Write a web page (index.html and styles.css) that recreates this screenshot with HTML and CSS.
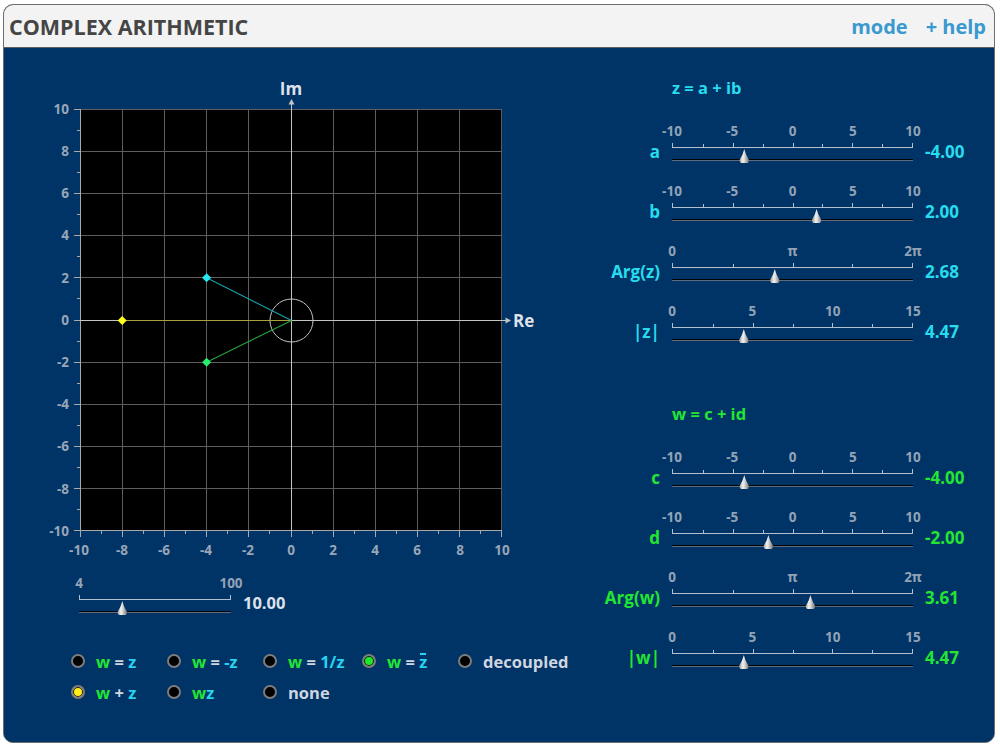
FILE: index.html
```html
<!DOCTYPE html>
<html lang="en">
<head>
<meta charset="utf-8">
<title>Complex Arithmetic</title>
<link rel="stylesheet" href="styles.css">
</head>
<body>
<div class="app">
  <header class="hdr">
    <span class="title">COMPLEX ARITHMETIC</span>
    <nav class="links"><span>mode</span><span class="help">+ help</span></nav>
  </header>
  <main class="main">
    <section class="left">
      <svg class="plot" viewBox="30 70 540 500" width="540" height="500" xmlns="http://www.w3.org/2000/svg">
        <rect x="80" y="109" width="422" height="422" fill="#000"/>
        <g stroke="#5e5e5e" stroke-width="1">
          <line x1="122.5" y1="109" x2="122.5" y2="531"/>
          <line x1="164.5" y1="109" x2="164.5" y2="531"/>
          <line x1="206.5" y1="109" x2="206.5" y2="531"/>
          <line x1="248.5" y1="109" x2="248.5" y2="531"/>
          <line x1="333.5" y1="109" x2="333.5" y2="531"/>
          <line x1="375.5" y1="109" x2="375.5" y2="531"/>
          <line x1="417.5" y1="109" x2="417.5" y2="531"/>
          <line x1="459.5" y1="109" x2="459.5" y2="531"/>
          <line x1="501.5" y1="109" x2="501.5" y2="531"/>
          <line x1="80" y1="109.5" x2="502" y2="109.5"/>
          <line x1="80" y1="151.5" x2="502" y2="151.5"/>
          <line x1="80" y1="193.5" x2="502" y2="193.5"/>
          <line x1="80" y1="235.5" x2="502" y2="235.5"/>
          <line x1="80" y1="277.5" x2="502" y2="277.5"/>
          <line x1="80" y1="362.5" x2="502" y2="362.5"/>
          <line x1="80" y1="404.5" x2="502" y2="404.5"/>
          <line x1="80" y1="446.5" x2="502" y2="446.5"/>
          <line x1="80" y1="488.5" x2="502" y2="488.5"/>
        </g>
        <g stroke="#a9a9a9" stroke-width="1">
          <line x1="80.5" y1="109" x2="80.5" y2="531"/>
          <line x1="80" y1="530.5" x2="502" y2="530.5"/>
          <line x1="74" y1="109.5" x2="80" y2="109.5"/>
          <line x1="74" y1="151.5" x2="80" y2="151.5"/>
          <line x1="74" y1="193.5" x2="80" y2="193.5"/>
          <line x1="74" y1="235.5" x2="80" y2="235.5"/>
          <line x1="74" y1="277.5" x2="80" y2="277.5"/>
          <line x1="74" y1="320.5" x2="80" y2="320.5"/>
          <line x1="74" y1="362.5" x2="80" y2="362.5"/>
          <line x1="74" y1="404.5" x2="80" y2="404.5"/>
          <line x1="74" y1="446.5" x2="80" y2="446.5"/>
          <line x1="74" y1="488.5" x2="80" y2="488.5"/>
          <line x1="74" y1="530.5" x2="80" y2="530.5"/>
          <line x1="77" y1="130.5" x2="80" y2="130.5"/>
          <line x1="77" y1="172.5" x2="80" y2="172.5"/>
          <line x1="77" y1="214.5" x2="80" y2="214.5"/>
          <line x1="77" y1="256.5" x2="80" y2="256.5"/>
          <line x1="77" y1="298.5" x2="80" y2="298.5"/>
          <line x1="77" y1="341.5" x2="80" y2="341.5"/>
          <line x1="77" y1="383.5" x2="80" y2="383.5"/>
          <line x1="77" y1="425.5" x2="80" y2="425.5"/>
          <line x1="77" y1="467.5" x2="80" y2="467.5"/>
          <line x1="77" y1="509.5" x2="80" y2="509.5"/>
          <line x1="80.5" y1="531" x2="80.5" y2="537"/>
          <line x1="122.5" y1="531" x2="122.5" y2="537"/>
          <line x1="164.5" y1="531" x2="164.5" y2="537"/>
          <line x1="206.5" y1="531" x2="206.5" y2="537"/>
          <line x1="248.5" y1="531" x2="248.5" y2="537"/>
          <line x1="291.5" y1="531" x2="291.5" y2="537"/>
          <line x1="333.5" y1="531" x2="333.5" y2="537"/>
          <line x1="375.5" y1="531" x2="375.5" y2="537"/>
          <line x1="417.5" y1="531" x2="417.5" y2="537"/>
          <line x1="459.5" y1="531" x2="459.5" y2="537"/>
          <line x1="501.5" y1="531" x2="501.5" y2="537"/>
          <line x1="101.5" y1="531" x2="101.5" y2="534"/>
          <line x1="143.5" y1="531" x2="143.5" y2="534"/>
          <line x1="185.5" y1="531" x2="185.5" y2="534"/>
          <line x1="227.5" y1="531" x2="227.5" y2="534"/>
          <line x1="269.5" y1="531" x2="269.5" y2="534"/>
          <line x1="312.5" y1="531" x2="312.5" y2="534"/>
          <line x1="354.5" y1="531" x2="354.5" y2="534"/>
          <line x1="396.5" y1="531" x2="396.5" y2="534"/>
          <line x1="438.5" y1="531" x2="438.5" y2="534"/>
          <line x1="480.5" y1="531" x2="480.5" y2="534"/>
        </g>
        <g stroke="#c4c4c4" stroke-width="1" fill="none">
          <line x1="291.5" y1="103" x2="291.5" y2="531"/>
          <line x1="80" y1="320.5" x2="506" y2="320.5"/>
          <circle cx="291.5" cy="320.5" r="21.5"/>
        </g>
        <g fill="#c4c4c4">
          <polygon points="291.5,99 288.5,104.5 294.5,104.5"/>
          <polygon points="511,320.5 505.5,317.5 505.5,323.5"/>
        </g>
        <line x1="122" y1="320.5" x2="291.5" y2="320.5" stroke="#a9a23a" stroke-width="1.2"/>
        <line x1="206.6" y1="277.8" x2="291.5" y2="320.5" stroke="#1b9ea6" stroke-width="1.2"/>
        <line x1="206.6" y1="362.2" x2="291.5" y2="320.5" stroke="#27a03c" stroke-width="1.2"/>
        <polygon points="122.2,316 126.7,320.5 122.2,325 117.7,320.5" fill="#ffff1e"/>
        <polygon points="206.6,273.3 211.1,277.8 206.6,282.3 202.1,277.8" fill="#26e8f2"/>
        <polygon points="206.6,357.7 211.1,362.2 206.6,366.7 202.1,362.2" fill="#27ec6e"/>
        <g class="ylab" text-anchor="end">
          <text x="69" y="109">10</text>
          <text x="69" y="151">8</text>
          <text x="69" y="193">6</text>
          <text x="69" y="235">4</text>
          <text x="69" y="278">2</text>
          <text x="69" y="320">0</text>
          <text x="69" y="362">-2</text>
          <text x="69" y="404">-4</text>
          <text x="69" y="446">-6</text>
          <text x="69" y="489">-8</text>
          <text x="69" y="531">-10</text>
        </g>
        <g class="xlab" text-anchor="middle">
          <text x="79" y="550">-10</text>
          <text x="122" y="550">-8</text>
          <text x="164" y="550">-6</text>
          <text x="206" y="550">-4</text>
          <text x="248" y="550">-2</text>
          <text x="291" y="550">0</text>
          <text x="333" y="550">2</text>
          <text x="375" y="550">4</text>
          <text x="417" y="550">6</text>
          <text x="460" y="550">8</text>
          <text x="502" y="550">10</text>
        </g>
        <text class="axname" x="291" y="88" text-anchor="middle">Im</text>
        <text class="axname" x="513" y="320" text-anchor="start">Re</text>
      </svg>

      <div class="zoomrow">
        <div class="slider short">
          <div class="tlabels"><span style="left:0%">4</span><span style="left:100%">100</span></div>
          <div class="scale"></div>
          <div class="track"><b class="thumb" style="left:28.5%"></b></div>
        </div>
        <div class="val plain">10.00</div>
      </div>

      <div class="radios">
        <label class="radio"><i class="dot"></i><span><em class="g">w</em> = <em class="c">z</em></span></label>
        <label class="radio"><i class="dot"></i><span><em class="g">w</em> = <em class="c">-z</em></span></label>
        <label class="radio"><i class="dot"></i><span><em class="g">w</em> = <em class="c">1/z</em></span></label>
        <label class="radio"><i class="dot on-green"></i><span><em class="g">w</em> = <em class="c bar">z</em></span></label>
        <label class="radio"><i class="dot"></i><span>decoupled</span></label>
        <label class="radio"><i class="dot on-yellow"></i><span><em class="g">w</em> + <em class="c">z</em></span></label>
        <label class="radio"><i class="dot"></i><span><em class="g">w</em><em class="c">z</em></span></label>
        <label class="radio"><i class="dot"></i><span>none</span></label>
      </div>
    </section>

    <section class="right">
      <div class="group zc">
        <div class="gtitle">z = a + ib</div>
        <div class="srow">
          <div class="lbl">a</div>
          <div class="slider">
            <div class="tlabels"><span style="left:0%">-10</span><span style="left:25%">-5</span><span style="left:50%">0</span><span style="left:75%">5</span><span style="left:100%">10</span></div>
            <div class="scale"><i style="left:12.5%"></i><i class="mj" style="left:25%"></i><i style="left:37.5%"></i><i class="mj" style="left:50%"></i><i style="left:62.5%"></i><i class="mj" style="left:75%"></i><i style="left:87.5%"></i></div>
            <div class="track"><b class="thumb" style="left:30%"></b></div>
          </div>
          <div class="val">-4.00</div>
        </div>
        <div class="srow">
          <div class="lbl">b</div>
          <div class="slider">
            <div class="tlabels"><span style="left:0%">-10</span><span style="left:25%">-5</span><span style="left:50%">0</span><span style="left:75%">5</span><span style="left:100%">10</span></div>
            <div class="scale"><i style="left:12.5%"></i><i class="mj" style="left:25%"></i><i style="left:37.5%"></i><i class="mj" style="left:50%"></i><i style="left:62.5%"></i><i class="mj" style="left:75%"></i><i style="left:87.5%"></i></div>
            <div class="track"><b class="thumb" style="left:60%"></b></div>
          </div>
          <div class="val">2.00</div>
        </div>
        <div class="srow">
          <div class="lbl">Arg(z)</div>
          <div class="slider">
            <div class="tlabels"><span style="left:0%">0</span><span style="left:50%">π</span><span style="left:100%">2π</span></div>
            <div class="scale"><i style="left:25%"></i><i class="mj" style="left:50%"></i><i style="left:75%"></i></div>
            <div class="track"><b class="thumb" style="left:42.65%"></b></div>
          </div>
          <div class="val">2.68</div>
        </div>
        <div class="srow">
          <div class="lbl">|z|</div>
          <div class="slider">
            <div class="tlabels"><span style="left:0%">0</span><span style="left:33.333%">5</span><span style="left:66.667%">10</span><span style="left:100%">15</span></div>
            <div class="scale"><i style="left:16.667%"></i><i class="mj" style="left:33.333%"></i><i style="left:50%"></i><i class="mj" style="left:66.667%"></i><i style="left:83.333%"></i></div>
            <div class="track"><b class="thumb" style="left:29.8%"></b></div>
          </div>
          <div class="val">4.47</div>
        </div>
      </div>

      <div class="group wc">
        <div class="gtitle">w = c + id</div>
        <div class="srow">
          <div class="lbl">c</div>
          <div class="slider">
            <div class="tlabels"><span style="left:0%">-10</span><span style="left:25%">-5</span><span style="left:50%">0</span><span style="left:75%">5</span><span style="left:100%">10</span></div>
            <div class="scale"><i style="left:12.5%"></i><i class="mj" style="left:25%"></i><i style="left:37.5%"></i><i class="mj" style="left:50%"></i><i style="left:62.5%"></i><i class="mj" style="left:75%"></i><i style="left:87.5%"></i></div>
            <div class="track"><b class="thumb" style="left:30%"></b></div>
          </div>
          <div class="val">-4.00</div>
        </div>
        <div class="srow">
          <div class="lbl">d</div>
          <div class="slider">
            <div class="tlabels"><span style="left:0%">-10</span><span style="left:25%">-5</span><span style="left:50%">0</span><span style="left:75%">5</span><span style="left:100%">10</span></div>
            <div class="scale"><i style="left:12.5%"></i><i class="mj" style="left:25%"></i><i style="left:37.5%"></i><i class="mj" style="left:50%"></i><i style="left:62.5%"></i><i class="mj" style="left:75%"></i><i style="left:87.5%"></i></div>
            <div class="track"><b class="thumb" style="left:40%"></b></div>
          </div>
          <div class="val">-2.00</div>
        </div>
        <div class="srow">
          <div class="lbl">Arg(w)</div>
          <div class="slider">
            <div class="tlabels"><span style="left:0%">0</span><span style="left:50%">π</span><span style="left:100%">2π</span></div>
            <div class="scale"><i style="left:25%"></i><i class="mj" style="left:50%"></i><i style="left:75%"></i></div>
            <div class="track"><b class="thumb" style="left:57.45%"></b></div>
          </div>
          <div class="val">3.61</div>
        </div>
        <div class="srow">
          <div class="lbl">|w|</div>
          <div class="slider">
            <div class="tlabels"><span style="left:0%">0</span><span style="left:33.333%">5</span><span style="left:66.667%">10</span><span style="left:100%">15</span></div>
            <div class="scale"><i style="left:16.667%"></i><i class="mj" style="left:33.333%"></i><i style="left:50%"></i><i class="mj" style="left:66.667%"></i><i style="left:83.333%"></i></div>
            <div class="track"><b class="thumb" style="left:29.8%"></b></div>
          </div>
          <div class="val">4.47</div>
        </div>
      </div>
    </section>
  </main>
</div>
</body>
</html>
```

FILE: styles.css
```css
* { box-sizing: border-box; }

html, body {
  margin: 0;
  padding: 0;
  background: #ffffff;
}

body {
  font-family: "Open Sans", "Noto Sans", "DejaVu Sans", sans-serif;
  font-weight: 700;
}

.app {
  margin: 4px 0 0 3px;
  width: 992px;
  height: 739px;
  border: 1px solid #6e6e6e;
  border-radius: 10px;
  overflow: hidden;
  display: flex;
  flex-direction: column;
  background: #003366;
}

.hdr {
  height: 43px;
  flex: 0 0 43px;
  background: #f3f3f3;
  border-bottom: 1px solid #5f5f5f;
  display: flex;
  align-items: center;
  justify-content: space-between;
  padding: 0 8px 0 5px;
}

.title {
  font-size: 21.5px;
  color: #454545;
}

.links {
  display: flex;
  gap: 18px;
  font-size: 20px;
  color: #3a99cf;
}

.main {
  flex: 1;
  display: flex;
  background: #003366;
}

.left {
  width: 566px;
  padding: 22px 0 0 26px;
}

.plot {
  display: block;
}

.ylab text, .xlab text {
  font-family: "Open Sans", "Noto Sans", sans-serif;
  font-weight: 700;
  font-size: 13.5px;
  fill: #97a6b8;
  dominant-baseline: central;
}

.axname {
  font-family: "Open Sans", "Noto Sans", sans-serif;
  font-weight: 700;
  font-size: 17px;
  fill: #dde2ea;
  dominant-baseline: central;
}

/* sliders */
.slider {
  width: 241px;
  flex: 0 0 auto;
}

.slider.short {
  width: 152px;
}

.tlabels {
  position: relative;
  height: 16px;
  font-size: 13.5px;
  line-height: 16px;
  color: #93a3b6;
}

.tlabels span {
  position: absolute;
  top: 0;
  transform: translateX(-50%);
  white-space: nowrap;
}

.scale {
  position: relative;
  height: 5px;
  margin-top: 4px;
  border: 1px solid #b3bfcc;
  border-top: 0;
}

.scale i {
  position: absolute;
  bottom: 0;
  width: 1px;
  height: 3px;
  background: #b3bfcc;
}

.scale i.mj {
  height: 4px;
}

.track {
  position: relative;
  height: 2px;
  margin-top: 11px;
  background: linear-gradient(#050505 50%, #5d6b7e 50%);
}

.thumb {
  position: absolute;
  top: -10px;
  width: 10px;
  height: 14px;
  margin-left: -5px;
  clip-path: polygon(50% 0, 68% 40%, 100% 82%, 85% 100%, 15% 100%, 0 82%, 32% 40%);
  background: linear-gradient(to right, #8e8e8e 0%, #f2f2f2 38%, #d9d9d9 55%, #737373 100%);
}

.srow {
  display: flex;
  height: 40px;
}

.lbl {
  width: 70px;
  margin-right: 12px;
  text-align: right;
  padding-top: 20px;
  font-size: 17px;
  line-height: 18px;
  white-space: nowrap;
}

.val {
  margin-left: 12px;
  padding-top: 20px;
  font-size: 17px;
  line-height: 18px;
}

.val.plain {
  padding-top: 19px;
  font-size: 16.5px;
  color: #dde2ea;
}

.zoomrow {
  display: flex;
  margin: 5px 0 0 49px;
  height: 40px;
}

/* right panel */
.right {
  padding: 31px 0 0 20px;
}

.group {
  display: flex;
  flex-direction: column;
  gap: 20px;
}

.group.wc {
  margin-top: 62px;
}

.gtitle {
  margin-left: 82px;
  margin-bottom: 6px;
  font-size: 16.5px;
  line-height: 18px;
  height: 18px;
}

.zc .gtitle, .zc .lbl, .zc .val { color: #27dced; }
.wc .gtitle, .wc .lbl, .wc .val { color: #22e632; }

/* radios */
.radios {
  display: grid;
  grid-template-columns: 96px 96px 99px 96px auto;
  row-gap: 11px;
  margin: 36px 0 0 41px;
}

.radio {
  display: flex;
  align-items: center;
  gap: 11px;
  height: 20px;
  font-size: 16.5px;
  color: #cfd6e0;
  white-space: nowrap;
}

.radio em {
  font-style: normal;
}

.radio em.g { color: #22e632; }
.radio em.c { color: #27d3ee; }

.radio em.bar {
  position: relative;
  display: inline-block;
}

.radio em.bar::before {
  content: "";
  position: absolute;
  left: 1px;
  right: 1px;
  top: 3px;
  height: 2px;
  background: currentColor;
}

.dot {
  width: 14px;
  height: 14px;
  border-radius: 50%;
  border: 2px solid #7c7c7c;
  background: #000;
  flex: 0 0 14px;
}

.dot.on-green {
  background: #1ee82a;
  box-shadow: inset 0 0 0 1px #111;
}

.dot.on-yellow {
  background: #ffee1a;
  box-shadow: inset 0 0 0 1px #111;
}
```
